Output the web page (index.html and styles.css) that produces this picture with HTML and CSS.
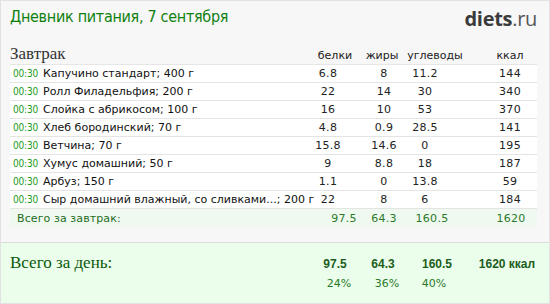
FILE: index.html
```html
<!DOCTYPE html>
<html lang="ru">
<head>
<meta charset="utf-8">
<link rel="stylesheet" href="styles.css">
</head>
<body>
<div class="page">
  <div class="top">
    <h1 class="title">Дневник питания, 7 сентября</h1>
    <div class="logo"><b>diets</b>.ru</div>
  </div>
  <div class="meal-head">
    <div class="meal-name">Завтрак</div>
    <div class="h h1">белки</div>
    <div class="h h2">жиры</div>
    <div class="h h3">углеводы</div>
    <div class="h h4">ккал</div>
  </div>
  <div class="rows">
    <div class="row"><span class="time">00:30</span><span class="name">Капучино стандарт; 400 г</span><span class="c c1">6.8</span><span class="c c2">8</span><span class="c c3">11.2</span><span class="c c4">144</span></div>
    <div class="row"><span class="time">00:30</span><span class="name">Ролл Филадельфия; 200 г</span><span class="c c1">22</span><span class="c c2">14</span><span class="c c3">30</span><span class="c c4">340</span></div>
    <div class="row"><span class="time">00:30</span><span class="name">Слойка с абрикосом; 100 г</span><span class="c c1">16</span><span class="c c2">10</span><span class="c c3">53</span><span class="c c4">370</span></div>
    <div class="row"><span class="time">00:30</span><span class="name">Хлеб бородинский; 70 г</span><span class="c c1">4.8</span><span class="c c2">0.9</span><span class="c c3">28.5</span><span class="c c4">141</span></div>
    <div class="row"><span class="time">00:30</span><span class="name">Ветчина; 70 г</span><span class="c c1">15.8</span><span class="c c2">14.6</span><span class="c c3">0</span><span class="c c4">195</span></div>
    <div class="row"><span class="time">00:30</span><span class="name">Хумус домашний; 50 г</span><span class="c c1">9</span><span class="c c2">8.8</span><span class="c c3">18</span><span class="c c4">187</span></div>
    <div class="row"><span class="time">00:30</span><span class="name">Арбуз; 150 г</span><span class="c c1">1.1</span><span class="c c2">0</span><span class="c c3">13.8</span><span class="c c4">59</span></div>
    <div class="row"><span class="time">00:30</span><span class="name">Сыр домашний влажный, со сливками...; 200 г</span><span class="c c1">22</span><span class="c c2">8</span><span class="c c3">6</span><span class="c c4">184</span></div>
    <div class="row total"><span class="name">Всего за завтрак:</span><span class="c t1">97.5</span><span class="c t2">64.3</span><span class="c t3">160.5</span><span class="c t4">1620</span></div>
  </div>
  <div class="day">
    <div class="day-line">
      <div class="day-label">Всего за день:</div>
      <div class="d d1">97.5</div>
      <div class="d d2">64.3</div>
      <div class="d d3">160.5</div>
      <div class="d d4">1620 ккал</div>
    </div>
    <div class="pct-line">
      <div class="p p1">24%</div>
      <div class="p p2">36%</div>
      <div class="p p3">40%</div>
    </div>
  </div>
</div>
</body>
</html>
```
FILE: styles.css
```css
* { box-sizing: border-box; }
html, body { margin: 0; padding: 0; }
body { width: 550px; height: 304px; overflow: hidden; background: #fff; }
.page {
  width: 550px; height: 304px;
  background: #f7f7f7;
  border: 1px solid #e2e2e2;
  display: flex; flex-direction: column;
}
.top { display: flex; justify-content: space-between; align-items: flex-start; padding: 5px 12px 0 9px; height: 38px; }
.title { margin: 0; font: normal 16px/22px "DejaVu Sans Condensed", "DejaVu Sans", sans-serif; color: #0f800f; letter-spacing: -0.3px; }
.logo { font: 20px/22px "Open Sans", sans-serif; color: #555; letter-spacing: -0.3px; padding-top: 2px; }
.logo b { font-weight: 700; color: #3b3b3b; }
.meal-head { display: flex; align-items: flex-end; padding-left: 9px; height: 25px; }
.meal-name { flex: 1; font: 17px/20px "Liberation Serif", serif; color: #333; }
.h { font: 11px/16px "DejaVu Sans", sans-serif; color: #222; text-align: center; }
.h1 { width: 44px; }
.h2 { width: 50px; }
.h3 { width: 56px; }
.h4 { width: 54px; margin-left: 20px; margin-right: 12px; }
.rows { margin: 0 12px 0 9px; border-top: 1px solid #e6e6e6; }
.row { display: flex; align-items: center; height: 18px; background: #fff; border-bottom: 1px solid #e4e4e4; font: 11px/17px "DejaVu Sans", sans-serif; color: #111; }
.time { flex: none; font: 10px/17px "DejaVu Sans Condensed", "DejaVu Sans", sans-serif; color: #1a9a1a; width: 33px; padding-left: 3px; letter-spacing: -0.2px; }
.name { flex: 1; min-width: 0; white-space: nowrap; }
.c { flex: none; text-align: center; color: #222; letter-spacing: 0.3px; }
.c1 { width: 48px; }
.c2 { width: 38px; margin-left: 13px; }
.c3 { width: 44px; }
.c4 { width: 54px; margin-left: 36px; }
.total { background: #f0f9f0; border-bottom: none; }
.total .name { padding-left: 7px; color: #1f6d1f; letter-spacing: 0.1px; }
.total .c { color: #2a7a2a; }
.t1 { width: 44px; }
.t2 { width: 36px; }
.t3 { width: 40px; margin-left: 10px; }
.t4 { width: 52px; margin-left: 33px; }
.day { margin-top: auto; height: 61px; border-top: 1px solid #dcdcdc; background: #ebfdeb; padding: 10px 12px 0 9px; }
.day-line { display: flex; align-items: baseline; }
.day-label { flex: 1; font: 17px/20px "Liberation Serif", serif; color: #0a5a0a; }
.d { font: bold 12px/20px "Liberation Sans", Arial, sans-serif; color: #1c5e1c; text-align: center; }
.d1 { width: 48px; }
.d2 { width: 48px; }
.d3 { width: 48px; margin-left: 6px; }
.d4 { width: 60px; margin-left: 16px; }
.pct-line { display: flex; padding-left: 305px; }
.p { font: 11px/20px "DejaVu Sans", sans-serif; color: #2a7a2a; text-align: center; width: 48px; }
.p3 { margin-left: -1px; }
```
